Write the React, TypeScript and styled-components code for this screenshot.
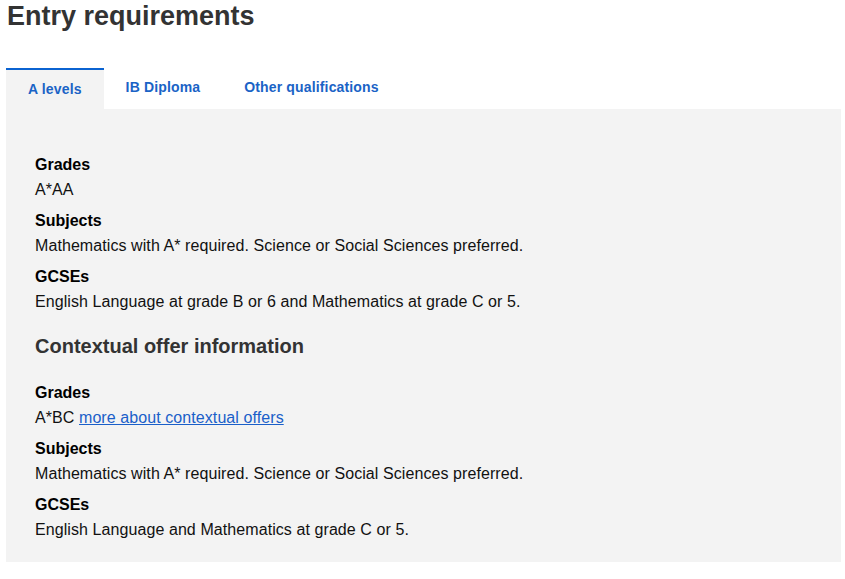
import React, { useState } from "react";
import styled, { createGlobalStyle } from "styled-components";

const GlobalStyle = createGlobalStyle`
  body {
    margin: 0;
    background: #ffffff;
    font-family: "Liberation Sans", Arial, sans-serif;
  }
`;

type Requirement = { label: string; value: string; link?: string };

const standard: Requirement[] = [
  { label: "Grades", value: "A*AA" },
  {
    label: "Subjects",
    value: "Mathematics with A* required. Science or Social Sciences preferred.",
  },
  {
    label: "GCSEs",
    value: "English Language at grade B or 6 and Mathematics at grade C or 5.",
  },
];

const contextual: Requirement[] = [
  { label: "Grades", value: "A*BC", link: "more about contextual offers" },
  {
    label: "Subjects",
    value: "Mathematics with A* required. Science or Social Sciences preferred.",
  },
  { label: "GCSEs", value: "English Language and Mathematics at grade C or 5." },
];

const tabs = ["A levels", "IB Diploma", "Other qualifications"];

const App: React.FC = () => {
  const [active, setActive] = useState<number>(0);

  const renderList = (items: Requirement[]) => (
    <List>
      {items.map((item) => (
        <React.Fragment key={item.label}>
          <Label>{item.label}</Label>
          <Value>
            {item.value}
            {item.link && (
              <>
                {" "}
                <MoreLink href="#">{item.link}</MoreLink>
              </>
            )}
          </Value>
        </React.Fragment>
      ))}
    </List>
  );

  return (
    <Page>
      <GlobalStyle />
      <Title>Entry requirements</Title>
      <TabList>
        {tabs.map((tab, i) => (
          <Tab key={tab} $active={i === active} onClick={() => setActive(i)}>
            {tab}
          </Tab>
        ))}
      </TabList>
      <Panel>
        {renderList(standard)}
        <SubTitle>Contextual offer information</SubTitle>
        {renderList(contextual)}
      </Panel>
    </Page>
  );
};
export default App;

const Page = styled.div`
  padding: 0 4px 0 6px;
`;

const Title = styled.h1`
  margin: 0 0 0 1px;
  font-size: 27px;
  line-height: 32px;
  font-weight: 700;
  color: #333333;
`;

const TabList = styled.div`
  display: flex;
  align-items: flex-start;
  margin-top: 36px;
`;

const Tab = styled.button<{ $active: boolean }>`
  border: 0;
  border-top: ${(p) => (p.$active ? "2px solid #0b63d1" : "0")};
  background: ${(p) => (p.$active ? "#f3f3f3" : "#ffffff")};
  padding: 9px 22px 10px;
  font-family: inherit;
  font-size: 14px;
  line-height: 20px;
  font-weight: 700;
  letter-spacing: 0.15px;
  color: #1a63c6;
  cursor: pointer;
`;

const Panel = styled.div`
  background: #f3f3f3;
  padding: 44px 29px 20px;
`;

const List = styled.dl`
  margin: 0;
`;

const Label = styled.dt`
  font-size: 16px;
  line-height: 24px;
  font-weight: 700;
  color: #000000;
  margin-bottom: 1px;
`;

const Value = styled.dd`
  margin: 0 0 7px;
  font-size: 16px;
  line-height: 24px;
  letter-spacing: 0.08px;
  color: #111111;

  &:last-child {
    margin-bottom: 0;
  }
`;

const MoreLink = styled.a`
  color: #1a5fc9;
  text-decoration: underline;
`;

const SubTitle = styled.h2`
  margin: 18px 0 21px;
  font-size: 20px;
  line-height: 28px;
  font-weight: 700;
  color: #333333;
`;
